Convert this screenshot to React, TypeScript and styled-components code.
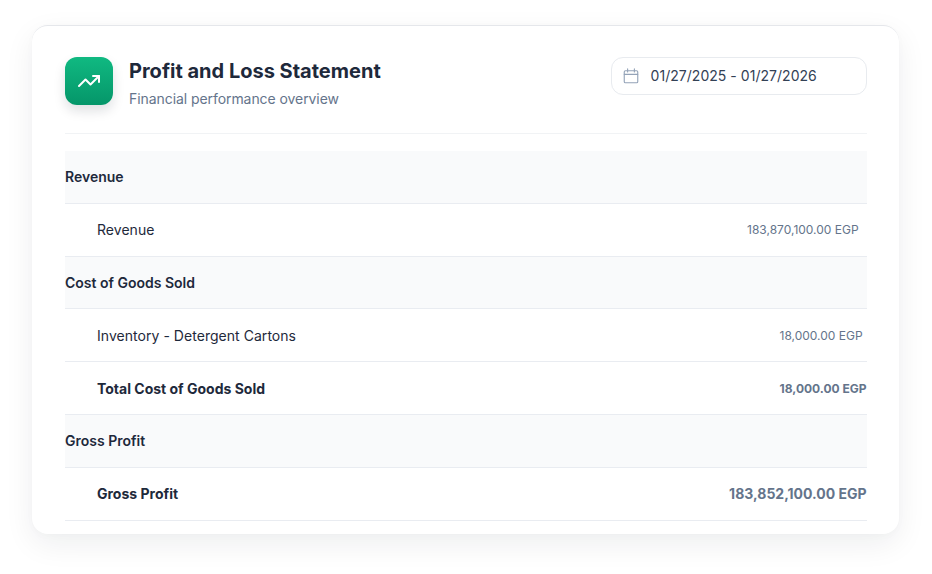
import React from 'react';
import styled, { createGlobalStyle } from 'styled-components';

const GlobalStyle = createGlobalStyle`
  html, body {
    margin: 0;
    background: #fff;
  }
  body {
    font-family: Inter, "Liberation Sans", sans-serif;
    color: #1e293b;
  }
`;

type Row = {
  label: string;
  kind: 'section' | 'item' | 'total' | 'grand';
  amount?: string;
  inset?: number;
};

const rows: Row[] = [
  { label: 'Revenue', kind: 'section' },
  { label: 'Revenue', kind: 'item', amount: '183,870,100.00 EGP', inset: 8 },
  { label: 'Cost of Goods Sold', kind: 'section' },
  { label: 'Inventory - Detergent Cartons', kind: 'item', amount: '18,000.00 EGP', inset: 4 },
  { label: 'Total Cost of Goods Sold', kind: 'total', amount: '18,000.00 EGP' },
  { label: 'Gross Profit', kind: 'section' },
  { label: 'Gross Profit', kind: 'grand', amount: '183,852,100.00 EGP' },
];

function App() {
  return (
    <Page>
      <GlobalStyle />
      <Card>
        <Header>
          <TitleGroup>
            <IconTile>
              <svg width="24" height="24" viewBox="0 0 24 24" fill="none" stroke="#fff" strokeWidth="2" strokeLinecap="round" strokeLinejoin="round">
                <path d="M22 7l-8.5 8.5-5-5L2 17" />
                <path d="M16 7h6v6" />
              </svg>
            </IconTile>
            <div>
              <Title>Profit and Loss Statement</Title>
              <Subtitle>Financial performance overview</Subtitle>
            </div>
          </TitleGroup>
          <DateRange>
            <svg width="18" height="18" viewBox="0 0 24 24" fill="none" stroke="#94a3b8" strokeWidth="1.5" strokeLinecap="round" strokeLinejoin="round">
              <rect x="3" y="5" width="18" height="16" rx="1.5" />
              <path d="M7.5 2.5v4M16.5 2.5v4M3 9.75h18" />
            </svg>
            <span>01/27/2025 - 01/27/2026</span>
          </DateRange>
        </Header>
        <Statement>
          {rows.map((row, i) => (
            <StatementRow key={i} $section={row.kind === 'section'}>
              <Label $kind={row.kind}>{row.label}</Label>
              {row.amount && (
                <Amount $kind={row.kind} $inset={row.inset ?? 0}>
                  {row.amount}
                </Amount>
              )}
            </StatementRow>
          ))}
        </Statement>
      </Card>
    </Page>
  );
}

const Page = styled.div`
  padding: 25px 33px 40px 32px;
`;
const Card = styled.div`
  box-sizing: border-box;
  height: 509px;
  padding: 31px 32.4px 0 33px;
  background: #fff;
  border-radius: 16px;
  border-top: 1px solid #e5e7eb;
  box-shadow: 0 10px 30px rgba(15, 23, 42, 0.07), 0 2px 8px rgba(15, 23, 42, 0.02);
`;
const Header = styled.header`
  display: flex;
  align-items: flex-start;
  justify-content: space-between;
  height: 76px;
  border-bottom: 1px solid #f1f3f5;
  margin-bottom: 17px;
`;
const TitleGroup = styled.div`
  display: flex;
  gap: 16px;
`;
const IconTile = styled.div`
  width: 48px;
  height: 48px;
  border-radius: 12px;
  display: flex;
  align-items: center;
  justify-content: center;
  background: linear-gradient(180deg, #10b981, #059669);
  box-shadow: 0 6px 12px rgba(15, 23, 42, 0.13);
`;
const Title = styled.h1`
  margin: 0;
  font-size: 20px;
  line-height: 28px;
  font-weight: 700;
  color: #1e293b;
`;
const Subtitle = styled.p`
  margin: 4px 0 0;
  font-size: 14px;
  line-height: 20px;
  letter-spacing: -0.07px;
  color: #64748b;
`;
const DateRange = styled.div`
  box-sizing: border-box;
  width: 256px;
  height: 38px;
  display: flex;
  align-items: center;
  gap: 11px;
  padding: 0 10px 1px;
  border: 1px solid #e8ebef;
  border-radius: 12px;
  font-size: 14px;
  letter-spacing: 0.03px;
  color: #334155;
`;
const Statement = styled.div`
  display: flex;
  flex-direction: column;
`;
const StatementRow = styled.div<{ $section: boolean }>`
  box-sizing: border-box;
  height: 52.8px;
  display: flex;
  align-items: center;
  justify-content: space-between;
  border-bottom: 1px solid #e9ecf1;
  background: ${(p) => (p.$section ? '#f9fafb' : '#fff')};
`;
const Label = styled.span<{ $kind: Row['kind'] }>`
  font-size: 14px;
  font-weight: ${(p) => (p.$kind === 'item' ? 400 : p.$kind === 'section' ? 600 : 700)};
  letter-spacing: ${(p) => (p.$kind === 'item' ? 0.04 : 0)}px;
  padding-left: ${(p) => (p.$kind === 'section' ? 0 : 32)}px;
  color: #1e293b;
`;
const Amount = styled.span<{ $kind: Row['kind']; $inset: number }>`
  font-size: ${(p) => (p.$kind === 'grand' ? 14 : 12)}px;
  font-weight: ${(p) => (p.$kind === 'item' ? 400 : 700)};
  padding-right: ${(p) => p.$inset}px;
  color: #64748b;
`;

export default App;
